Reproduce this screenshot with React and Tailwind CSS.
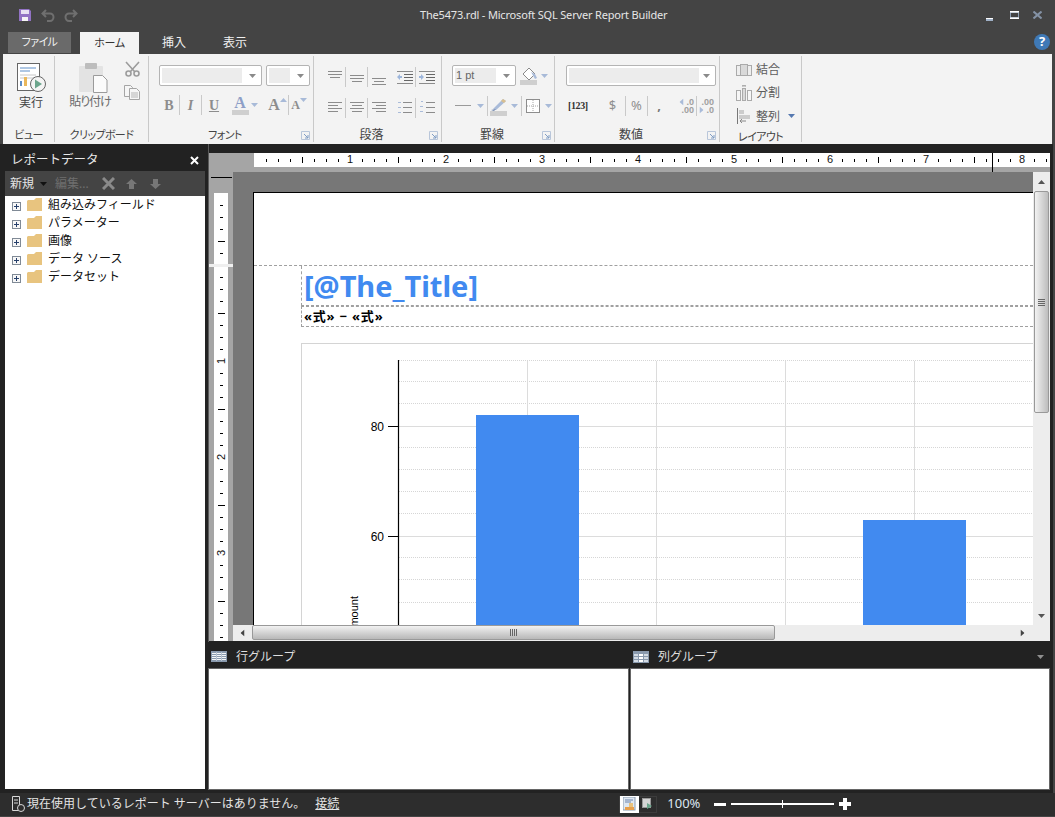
import React from "react";

// small triangle used by every dropdown in the ribbon
function Caret({ color = "#8a8a8a", className = "" }) {
  return (
    <svg width="7" height="4" viewBox="0 0 7 4" className={className}>
      <path d="M0 0h7L3.5 4z" fill={color} />
    </svg>
  );
}

function Launcher() {
  return (
    <svg width="9" height="9" viewBox="0 0 9 9" className="mr-[3px] mt-[2px] shrink-0">
      <path d="M.5 .5h8v8h-8z" fill="none" stroke="#b9c6da" />
      <path d="M3 3l4 4M7 4v3H4" fill="none" stroke="#7f9cc4" />
    </svg>
  );
}

function Group({ className, label, narrow, launcher, children }) {
  return (
    <div className={`flex h-full shrink-0 flex-col border-r border-[#c9c9c9] ${className}`}>
      <div className="flex-1">{children}</div>
      <div className="flex h-[18px] items-center pt-[3px] text-[12px] leading-none text-[#444] [font-feature-settings:'palt']">
        <span className={`flex-1 text-center ${narrow ? "text-[11px] tracking-[-0.6px]" : ""}`}>{label}</span>
        {launcher && <Launcher />}
      </div>
    </div>
  );
}

function Combo({ className, innerClass, text }) {
  return (
    <div className={`flex h-[21px] items-center rounded-[2px] border border-[#b4b4b4] bg-white pl-[2px] ${className}`}>
      <div className={`h-[15px] bg-[#ececec] font-['Liberation_Sans',sans-serif] text-[11px] leading-[15px] text-[#666] ${innerClass}`}>{text}</div>
      <Caret className="ml-auto mr-[5px]" />
    </div>
  );
}

// lines: [x1, x2, y, colour]
function Lines({ lines, w = 18, h = 16, color = "#8c8c8c", children }) {
  return (
    <svg width={w} height={h} viewBox={`0 0 ${w} ${h}`}>
      {lines.map((l, i) => (
        <path key={i} d={`M${l[0]} ${l[2] + 0.5}H${l[1]}`} stroke={l[3] || color} />
      ))}
      {children}
    </svg>
  );
}

function Cell({ className, children }) {
  return <div className={`flex h-[20px] shrink-0 items-center justify-center ${className}`}>{children}</div>;
}

function FolderIcon() {
  return (
    <svg width="15" height="13" viewBox="0 0 15 13" className="shrink-0">
      <path d="M0 3l1-1h6l2-2h6v13H0z" fill="#e8c47f" />
    </svg>
  );
}

function PlusBox() {
  return (
    <svg width="9" height="9" viewBox="0 0 9 9" className="shrink-0">
      <rect x=".5" y=".5" width="8" height="8" fill="#f7f7f7" stroke="#808a96" />
      <path d="M2 4.5h5M4.5 2v5" stroke="#27406b" />
    </svg>
  );
}

function RowsIcon() {
  return (
    <svg width="16" height="11" viewBox="0 0 16 11" className="shrink-0">
      <rect width="16" height="11" fill="#8a9aae" />
      {[2, 4, 6, 8].map((y) => (
        <rect key={y} x="1" y={y} width="14" height="1" fill="#f4f6f8" />
      ))}
      <path d="M5.5 1V10M10.5 1V10" stroke="#b6c2d0" />
    </svg>
  );
}

function ColumnsIcon() {
  return (
    <svg width="16" height="12" viewBox="0 0 16 12" className="shrink-0">
      <rect width="16" height="12" fill="#8a9aae" />
      {[3, 6, 9].map((y) => (
        <rect key={y} x="6" y={y} width="4" height="2" fill="#fff" />
      ))}
      {[3, 6, 9].map((y) => (
        <rect key={y} x="1" y={y} width="4" height="2" fill="#d3dbe4" />
      ))}
      {[3, 6, 9].map((y) => (
        <rect key={y} x="11" y={y} width="4" height="2" fill="#d3dbe4" />
      ))}
    </svg>
  );
}

function HorizontalRuler() {
  const ticks = Array.from({ length: 66 }, (_, i) => i + 1);
  return (
    <svg width="796" height="19" viewBox="0 0 796 19" className="block">
      <rect width="796" height="14" fill="#fff" />
      {ticks.map((i) => {
        const x = i * 12;
        if (i % 8 === 0) {
          return (
            <text key={i} x={x} y="10" fontSize="11" textAnchor="middle" fontFamily="Liberation Sans, sans-serif" fill="#111">
              {i / 8}
            </text>
          );
        }
        return i % 4 === 0 ? (
          <path key={i} d={`M${x + 0.5} 4V10`} stroke="#000" />
        ) : (
          <path key={i} d={`M${x + 0.5} 6V9`} stroke="#000" />
        );
      })}
      <path d="M738.5 0V19" stroke="#000" />
    </svg>
  );
}

function VerticalRuler() {
  const ticks = Array.from({ length: 31 }, (_, i) => i + 1);
  return (
    <svg width="24" height="469" viewBox="0 0 24 469" className="block shrink-0">
      <rect x="5" y="21" width="14" height="448" fill="#fff" />
      <path d="M2 5.5H23" stroke="#000" />
      {[33, 45, 57, 81].map((y) => <path key={y} d={`M11 ${y + 0.5}H14`} stroke="#000" />)}
      <path d="M9 69.5H16" stroke="#000" />
      <rect y="92" width="24" height="3" fill="#efefef" />
      {ticks.map((i) => {
        const y = 93 + i * 12;
        if (i % 8 === 0) {
          return (
            <text key={i} fontSize="11" textAnchor="middle" fontFamily="Liberation Sans, sans-serif" fill="#111" transform={`translate(15.5 ${y}) rotate(-90)`}>
              {i / 8}
            </text>
          );
        }
        return i % 4 === 0 ? (
          <path key={i} d={`M9 ${y + 0.5}H16`} stroke="#000" />
        ) : (
          <path key={i} d={`M11 ${y + 0.5}H14`} stroke="#000" />
        );
      })}
    </svg>
  );
}

function Chart() {
  // coordinates are relative to the chart frame at (302, 344)
  const minor = [17, 38, 60, 104, 126, 148, 170, 214, 236, 259];
  const major = [82, 192];
  const vertical = [225.5, 354.5, 483.5, 612.5];
  return (
    <svg width="731" height="281" viewBox="0 0 731 281" className="block">
      {minor.map((y) => <path key={y} d={`M97 ${y - 0.5}H731`} stroke="#d6d6d6" strokeDasharray="1 1" />)}
      {major.map((y) => <path key={y} d={`M97 ${y + 0.5}H731`} stroke="#dcdcdc" />)}
      {vertical.map((x) => <path key={x} d={`M${x} 17V281`} stroke="#dcdcdc" />)}
      <rect x="174" y="71" width="103" height="210" fill="#418af0" />
      <rect x="561" y="176" width="103" height="105" fill="#418af0" />
      <path d="M96.5 16V281" stroke="#000" strokeWidth="1.2" />
      <path d="M86 82.5H96M86 192.5H96" stroke="#000" />
      <g fontFamily="Liberation Sans, sans-serif" fontSize="12" fill="#000" textAnchor="end">
        <text x="82" y="87">80</text>
        <text x="82" y="197">60</text>
      </g>
      <text transform="translate(55.5 252) rotate(-90)" textAnchor="end" fontFamily="Liberation Sans, sans-serif" fontSize="11" fill="#000">
        Amount
      </text>
    </svg>
  );
}

function IndentIcon({ right }) {
  return (
    <Lines lines={[[1, 17, 2], [8, 17, 5, "#666"], [8, 17, 8, "#666"], [8, 17, 11, "#666"], [1, 17, 14]]}>
      <path d={right ? "M1 7h2V5l3 3-3 3V9H1z" : "M6 7H4V5L1 8l3 3V9h2z"} fill="#9db6dc" />
    </Lines>
  );
}

function Ribbon() {
  return (
    <div className="mx-[3px] flex h-[90px] bg-[#f3f3f3] py-[2px]">
      <Group className="w-[52px]" label="ビュー" narrow>
        <div className="flex flex-col items-center pl-[5px] pt-[7px]">
          <svg width="29" height="30" viewBox="0 0 29 30">
            <rect x=".5" y=".5" width="22" height="27" fill="#fff" stroke="#666" />
            <path d="M3 5h16M3 8h10" stroke="#5f8fc8" />
            <path d="M3 12h16M3 15h16" stroke="#c8c8c8" />
            <rect x="3" y="18" width="2" height="5" fill="#5f8fc8" />
            <rect x="7" y="14" width="3" height="9" fill="#eab85c" />
            <circle cx="21" cy="21" r="7.5" fill="#f4f4f4" stroke="#666" />
            <path d="M18 16.5l7 4.5-7 4.5z" fill="#6ba58c" />
          </svg>
          <span className="mt-[1px] text-[12px] leading-[18px] text-[#444]">実行</span>
        </div>
      </Group>
      <Group className="w-[94px]" label="クリップボード" narrow>
        <div className="flex pt-[5px]">
          <div className="ml-[13px] flex w-[44px] flex-col items-center pt-[2px]">
            <svg width="29" height="30" viewBox="0 0 29 30" className="ml-[6px]">
              <rect x="0" y="3" width="24" height="26" rx="1" fill="#e3e3e3" />
              <rect x="6" y="0" width="12" height="6" rx="1" fill="#bdbdbd" />
              <path d="M14.5 12.5h9l4.5 4.5v12.5H14.5z" fill="#fbfbfb" stroke="#9b9b9b" />
            </svg>
            <span className="whitespace-nowrap text-[12px] leading-[18px] tracking-[-1px] text-[#6a6a6a] [font-feature-settings:'palt']">貼り付け</span>
          </div>
          <div className="ml-[12px] flex flex-col items-center">
            <svg width="15" height="16" viewBox="0 0 15 16" fill="none" stroke="#9c9c9c" strokeWidth="1.6">
              <circle cx="3.5" cy="12.5" r="2.5" />
              <circle cx="11.5" cy="12.5" r="2.5" />
              <path d="M1 1l8.5 9.5M14 1L5.5 10.5" />
            </svg>
            <svg width="16" height="15" viewBox="0 0 16 15" className="mt-[8px]" fill="#f6f6f6" stroke="#a5a5a5">
              <path d="M.5 .5h6l2 2v9h-8z" />
              <path d="M5.5 3.5h7l3 3v8h-10z" />
              <path d="M7 8h7M7 10h7M7 12h7" stroke="#b5b5b5" />
            </svg>
          </div>
        </div>
      </Group>
      <Group className="w-[165px]" label="フォント" narrow launcher>
        <div className="pl-[10px] pt-[9px]">
          <div className="flex gap-[4px]">
            <Combo className="w-[103px]" innerClass="w-[80px]" />
            <Combo className="w-[44px]" innerClass="w-[21px]" />
          </div>
          <div className="mt-[9px] flex items-center font-['Liberation_Serif','Noto_Serif',serif] font-bold text-[#8d8d8d]">
            <Cell className="w-[21px] border-r border-[#c9c9c9] text-[14px]">B</Cell>
            <Cell className="w-[22px] border-r border-[#c9c9c9] text-[14px] italic">I</Cell>
            <Cell className="w-[24px] text-[14px] underline">U</Cell>
            <Cell className="ml-[4px] w-[20px] flex-col">
              <span className="text-[16px] leading-[15px] text-[#8e9fc7]">A</span>
              <span className="h-[5px] w-[17px] bg-[#cfcfcf]" />
            </Cell>
            <Caret color="#a8bad8" className="ml-[1px]" />
            <Cell className="ml-[9px] w-[22px] border-r border-[#c9c9c9] text-[16px]">
              A<Caret color="#a8bad8" className="mb-[10px] rotate-180" />
            </Cell>
            <Cell className="w-[20px] text-[12px]">
              A<Caret color="#a8bad8" className="mb-[10px]" />
            </Cell>
          </div>
        </div>
      </Group>
      <Group className="w-[128px]" label="段落" launcher>
        <div className="pl-[10px] pt-[11px]">
          <div className="flex items-center">
            <Cell className="w-[22px] border-r border-[#c9c9c9]">
              <Lines lines={[[2, 16, 2], [2, 16, 5], [4, 14, 8]]} />
            </Cell>
            <Cell className="w-[22px] border-r border-[#c9c9c9]">
              <Lines lines={[[2, 16, 6], [2, 16, 9], [4, 14, 12]]} />
            </Cell>
            <Cell className="w-[22px]">
              <Lines lines={[[2, 16, 9], [4, 14, 12], [2, 16, 15]]} />
            </Cell>
            <Cell className="ml-[5px] w-[21px] border-r border-[#c9c9c9]">
              <IndentIcon />
            </Cell>
            <Cell className="w-[22px]">
              <IndentIcon right />
            </Cell>
          </div>
          <div className="mt-[11px] flex items-center">
            <Cell className="w-[22px] border-r border-[#c9c9c9]">
              <Lines lines={[[2, 16, 2], [2, 12, 5], [2, 16, 8], [2, 12, 11]]} />
            </Cell>
            <Cell className="w-[22px] border-r border-[#c9c9c9]">
              <Lines lines={[[2, 16, 2], [4, 14, 5], [2, 16, 8], [4, 14, 11]]} />
            </Cell>
            <Cell className="w-[22px]">
              <Lines lines={[[2, 16, 2], [6, 16, 5], [2, 16, 8], [6, 16, 11]]} />
            </Cell>
            <Cell className="ml-[5px] w-[21px] border-r border-[#c9c9c9]">
              <Lines lines={[[2, 5, 2, "#a9bbd9"], [7, 16, 2], [2, 5, 7, "#a9bbd9"], [7, 16, 7], [2, 5, 12, "#a9bbd9"], [7, 16, 12]]} />
            </Cell>
            <Cell className="w-[22px]">
              <Lines lines={[[3, 5, 1, "#a9bbd9"], [8, 17, 2], [2, 5, 6, "#a9bbd9"], [8, 17, 7], [2, 5, 11, "#a9bbd9"], [8, 17, 12]]} />
            </Cell>
          </div>
        </div>
      </Group>
      <Group className="w-[113px]" label="罫線" launcher>
        <div className="pl-[10px] pt-[9px]">
          <div className="flex items-center">
            <Combo className="w-[64px]" innerClass="w-[41px] pl-[1px]" text="1 pt" />
            <svg width="18" height="20" viewBox="0 0 18 20" className="ml-[4px]">
              <path d="M3 8l6-6 6 6-6 6z" fill="#fff" stroke="#8a8a8a" />
              <path d="M11 6l4 2 2 4-2 1z" fill="#a9bbd9" />
              <rect y="14" width="17" height="5" fill="#cfcfcf" />
            </svg>
            <Caret color="#a8bad8" className="ml-[3px]" />
          </div>
          <div className="mt-[10px] flex items-center">
            <svg width="16" height="2" viewBox="0 0 16 2" className="ml-[3px]">
              <rect width="16" height="1" fill="#9a9a9a" />
            </svg>
            <Caret color="#a8bad8" className="ml-[6px]" />
            <div className="ml-[3px] h-[20px] border-r border-[#c9c9c9]" />
            <svg width="18" height="19" viewBox="0 0 18 19" className="ml-[2px]">
              <path d="M3 12L13 2l3 2L6 13z" fill="#a9bbd9" />
              <path d="M13 2l3 2-2 2-3-2z" fill="#d9bf8f" />
              <path d="M1 13l5-1-2 2z" fill="#6d84ad" />
              <rect y="14" width="17" height="5" fill="#cfcfcf" />
            </svg>
            <Caret color="#a8bad8" className="ml-[3px]" />
            <div className="ml-[3px] h-[20px] border-r border-[#c9c9c9]" />
            <svg width="14" height="14" viewBox="0 0 14 14" className="ml-[4px]">
              <rect x=".5" y=".5" width="13" height="13" fill="#fff" stroke="#8d8d8d" />
              <path d="M7 1v12M1 7h12" stroke="#a5a5a5" strokeDasharray="1 1" />
            </svg>
            <Caret color="#a8bad8" className="ml-[5px]" />
          </div>
        </div>
      </Group>
      <Group className="w-[165px]" label="数値" launcher>
        <div className="pl-[11px] pt-[9px]">
          <Combo className="w-[150px]" innerClass="w-[130px]" />
          <div className="mt-[10px] flex items-center text-[#8f8f8f]">
            <span className="ml-[2px] w-[18px] whitespace-nowrap text-center font-['Liberation_Serif',serif] text-[10px] font-bold leading-[12px] tracking-[-0.4px] text-[#333]">[123]</span>
            <Caret color="#5578b0" className="ml-[3px]" />
            <Cell className="ml-[8px] w-[29px] border-r border-[#c9c9c9] pl-[3px] text-[13px]">$</Cell>
            <Cell className="w-[22px] border-r border-[#c9c9c9] text-[13px]">%</Cell>
            <Cell className="w-[22px] text-[13px] font-bold text-[#777]">,</Cell>
            <Cell className="ml-[5px] w-[22px] flex-col items-end border-r border-[#c9c9c9] pr-[2px] font-['Liberation_Sans',sans-serif] text-[9px] font-bold leading-[8px] text-[#a0a0a0]">
              <span className="flex items-center gap-[1px]">
                <Caret color="#a9bbd9" className="rotate-90" />.0
              </span>
              <span>.00</span>
            </Cell>
            <Cell className="w-[22px] flex-col items-end pr-[5px] font-['Liberation_Sans',sans-serif] text-[9px] font-bold leading-[8px] text-[#a0a0a0]">
              <span>.00</span>
              <span className="flex items-center gap-[1px]">
                <Caret color="#a9bbd9" className="-rotate-90" />.0
              </span>
            </Cell>
          </div>
        </div>
      </Group>
      <Group className="w-[82px]" label="レイアウト" narrow>
        <div className="flex flex-col pl-[16px] pt-[2px] text-[12px] leading-[23px] text-[#5c5c5c]">
          <div className="flex h-[23px] items-center gap-[4px]">
            <svg width="16" height="14" viewBox="0 0 16 14" fill="#eee" stroke="#aaa">
              <rect x=".5" y="2.5" width="4" height="10" />
              <rect x="4.5" y="1.5" width="7" height="11" fill="#d9d9d9" />
              <rect x="11.5" y="2.5" width="4" height="10" />
            </svg>
            <span>結合</span>
          </div>
          <div className="flex h-[23px] items-center gap-[4px]">
            <svg width="16" height="16" viewBox="0 0 16 16" fill="#f6f6f6" stroke="#aaa">
              <path d="M6 1l2-1 2 1z" fill="#aaa" />
              <rect x=".5" y="5.5" width="4" height="10" />
              <rect x="6.5" y="3.5" width="3" height="12" fill="#d9d9d9" />
              <rect x="11.5" y="5.5" width="4" height="10" />
            </svg>
            <span>分割</span>
          </div>
          <div className="flex h-[24px] items-center gap-[4px]">
            <svg width="16" height="16" viewBox="0 0 16 16">
              <path d="M1.5 0V16" stroke="#777" />
              <rect x="3" y="2" width="5" height="4" fill="#ccc" />
              <rect x="3" y="7" width="11" height="4" fill="#ccc" />
              <path d="M10 13H4l2-2M4 13l2 2" fill="none" stroke="#888" />
            </svg>
            <span>整列</span>
            <Caret color="#5578b0" className="ml-[4px]" />
          </div>
        </div>
      </Group>
    </div>
  );
}

function ReportDataPanel() {
  const items = ["組み込みフィールド", "パラメーター", "画像", "データ ソース", "データセット"];
  return (
    <div className="flex w-[208px] shrink-0 flex-col pb-[4px] pl-[5px] pr-[3px]">
      <div className="flex h-[27px] items-center justify-between pl-[6px] pr-[6px] pt-[6px] text-[12.5px] text-[#e8e8e8]">
        <span>レポートデータ</span>
        <svg width="9" height="9" viewBox="0 0 9 9">
          <path d="M1 1l7 7M8 1L1 8" stroke="#fff" strokeWidth="2" />
        </svg>
      </div>
      <div className="flex h-[25px] items-center bg-[#444] pl-[5px] text-[12px]">
        <span className="text-[#e6e6e6]">新規</span>
        <Caret color="#111" className="ml-[6px]" />
        <span className="ml-[8px] text-[#6e6e6e]">編集...</span>
        <svg width="13" height="13" viewBox="0 0 13 13" className="ml-[13px]">
          <path d="M1 1l11 11M12 1L1 12" stroke="#8a8a8a" strokeWidth="3" />
        </svg>
        <svg width="11" height="10" viewBox="0 0 11 10" className="ml-[11px]">
          <path d="M5.5 0L11 5H8v5H3V5H0z" fill="#777" />
        </svg>
        <svg width="11" height="10" viewBox="0 0 11 10" className="ml-[13px]">
          <path d="M5.5 10L11 5H8V0H3v5H0z" fill="#777" />
        </svg>
      </div>
      <div className="flex-1 bg-white pt-[1px]">
        {items.map((item) => (
          <div key={item} className="flex h-[18px] items-center pl-[7px] text-[12px] text-[#111]">
            <PlusBox />
            <div className="mb-[3px] ml-[6px]"><FolderIcon /></div>
            <span className="ml-[6px] whitespace-pre pb-[2px]">{item}</span>
          </div>
        ))}
      </div>
    </div>
  );
}

function DesignSurface() {
  return (
    <div className="h-[433px] w-[780px] overflow-hidden border-l border-t border-black bg-white text-black">
      <div className="h-[73px] border-b border-dashed border-[#a0a0a0]" />
      <div className="ml-[47px] border-b border-l border-dashed border-[#a0a0a0] pl-[2px]">
        <div className="h-[39px] text-[29px] font-bold leading-[39px] text-[#418af0]">[@The_Title]</div>
      </div>
      <div className="ml-[47px] h-[21px] border-b border-l border-t border-dashed border-[#a0a0a0] pl-[2px] text-[13px] font-bold leading-[19px] tracking-[0.8px]">
        «式» − «式»
      </div>
      <div className="ml-[47px] mt-[16px] border-l border-t border-[#d4d4d4]">
        <Chart />
      </div>
    </div>
  );
}

function DesignArea() {
  return (
    <div className="flex flex-1 flex-col border-l border-[#5a5a5a]">
      <div className="h-[9px] bg-[#222]" />
      <div className="bg-[#a5a5a5] pl-[45px]">
        <HorizontalRuler />
      </div>
      <div className="flex bg-[#a5a5a5]">
        <VerticalRuler />
        <div className="flex flex-1 flex-col">
          <div className="flex h-[453px]">
            <div className="w-[800px] bg-[#777] pl-[20px] pt-[20px]">
              <DesignSurface />
            </div>
            <div className="flex w-[17px] flex-col items-center bg-[#ededed]">
              <div className="flex h-[19px] items-center">
                <Caret color="#555" className="rotate-180" />
              </div>
              <div className="flex h-[222px] w-[15px] flex-col items-center justify-center gap-[1px] rounded-[2px] border border-[#999] bg-linear-to-r from-[#f2f2f2] to-[#bdbdbd]">
                <div className="h-[1px] w-[7px] bg-[#666]" />
                <div className="h-[1px] w-[7px] bg-[#666]" />
                <div className="h-[1px] w-[7px] bg-[#666]" />
                <div className="h-[1px] w-[7px] bg-[#666]" />
              </div>
              <div className="mt-auto flex h-[19px] items-center">
                <Caret color="#555" />
              </div>
            </div>
          </div>
          <div className="flex h-[16px] items-start bg-[#ededed]">
            <div className="flex h-[15px] w-[19px] items-center justify-center">
              <Caret color="#444" className="rotate-90" />
            </div>
            <div className="flex h-[15px] w-[523px] items-center justify-center gap-[1px] rounded-[2px] border border-[#999] bg-linear-to-b from-[#f2f2f2] to-[#b8b8b8]">
              <div className="h-[7px] w-[1px] bg-[#666]" />
              <div className="h-[7px] w-[1px] bg-[#666]" />
              <div className="h-[7px] w-[1px] bg-[#666]" />
              <div className="h-[7px] w-[1px] bg-[#666]" />
            </div>
            <div className="flex h-[15px] w-[258px] items-center justify-end pr-[7px]">
              <Caret color="#444" className="-rotate-90" />
            </div>
          </div>
        </div>
      </div>
    </div>
  );
}

function GroupingPane() {
  return (
    <div className="flex flex-col">
      <div className="flex h-[26px] items-center pt-[3px] text-[12px] text-[#dedede]">
        <div className="flex w-[422px] items-center pl-[3px]">
          <RowsIcon />
          <span className="ml-[9px]">行グループ</span>
        </div>
        <div className="flex flex-1 items-center pl-[3px]">
          <ColumnsIcon />
          <span className="ml-[9px]">列グループ</span>
          <Caret color="#8f8f8f" className="ml-auto mr-[6px]" />
        </div>
      </div>
      <div className="flex h-[122px] gap-[1px]">
        <div className="w-[421px] border border-[#666] bg-white" />
        <div className="w-[420px] border border-[#666] bg-white" />
      </div>
    </div>
  );
}

function StatusBar() {
  return (
    <div className="flex h-[24px] items-center border-b border-[#444] bg-[#2d2d2d] pb-[1px] pl-[11px] text-[12px] text-[#e4e4e4]">
      <svg width="14" height="16" viewBox="0 0 14 16" fill="none" stroke="#d8d8d8" className="shrink-0">
        <path d="M1.5 .5h7v14h-7z" />
        <path d="M3 4h4M3 7h4" />
        <circle cx="10" cy="12" r="3.5" fill="#2d2d2d" />
      </svg>
      <span className="ml-[2px] whitespace-pre">現在使用しているレポート サーバーはありません。</span>
      <span className="ml-[10px] underline">接続</span>
      <div className="ml-[280px] flex h-[17px] w-[38px] items-center border border-[#3c3c3c]">
        <div className="flex h-[17px] w-[19px] items-center justify-center bg-white">
          <svg width="13" height="14" viewBox="0 0 13 14">
            <rect width="12" height="13" fill="#dfe8f2" stroke="#8a9aae" />
            <path d="M2 3h8M2 5h6" stroke="#6d84ad" />
            <rect x="2" y="10" width="9" height="3" fill="#e8a04c" />
            <rect x="6" y="6" width="4" height="4" fill="#e8c27e" />
          </svg>
        </div>
        <svg width="12" height="12" viewBox="0 0 12 12" className="ml-[3px]">
          <rect x=".5" y=".5" width="8" height="9" fill="#d5d5d5" stroke="#999" />
          <path d="M5 5l5 3-5 3z" fill="#6ba58c" />
        </svg>
      </div>
      <span className="ml-[10px] text-[13px] text-[#dce6f0]">100%</span>
      <div className="ml-[14px] h-[3px] w-[12px] bg-white" />
      <div className="relative ml-[5px] h-[2px] w-[103px] bg-white">
        <div className="absolute left-[51px] top-[-3px] h-[8px] w-[1px] bg-white" />
      </div>
      <svg width="12" height="12" viewBox="0 0 12 12" className="ml-[5px]">
        <path d="M4 0h4v4h4v4H8v4H4V8H0V4h4z" fill="#fff" />
      </svg>
    </div>
  );
}

export default function App() {
  return (
    <div className="flex h-[817px] w-[1055px] flex-col overflow-hidden bg-[#444] font-['Noto_Sans','Noto_Sans_CJK_JP',sans-serif]">
      {/* title bar */}
      <div className="flex h-[30px] shrink-0 items-center text-[#e6e6e6]">
        <div className="flex w-[420px] items-center pl-[19px]">
          <svg width="12" height="12" viewBox="0 0 12 12">
            <path d="M0 0h10l2 2v10H0z" fill="#9273c4" />
            <rect x="2" y="1" width="8" height="4" fill="#e8e2f2" />
            <rect x="3" y="8" width="6" height="4" fill="#f5f5f5" />
          </svg>
          <svg width="14" height="13" viewBox="0 0 14 13" fill="none" stroke="#6f6f6f" strokeWidth="2" className="ml-[10px]">
            <path d="M5 1L1.5 4.5 5 8M2 4.5h7a3.5 3.5 0 0 1 3.5 3.5c0 2-1.5 4-3.5 4H6" />
          </svg>
          <svg width="14" height="13" viewBox="0 0 14 13" fill="none" stroke="#6f6f6f" strokeWidth="2" className="ml-[9px]">
            <path d="M9 1l3.5 3.5L9 8M12 4.5H5A3.5 3.5 0 0 0 1.5 8c0 2 1.5 4 3.5 4h3" />
          </svg>
        </div>
        <span className="text-[11px] tracking-[-0.18px]">The5473.rdl - Microsoft SQL Server Report Builder</span>
        <div className="ml-auto flex items-center pr-[13px]">
          <div className="mt-[9px] h-[3px] w-[7px] border-t border-white bg-[#9fb0c6]" />
          <svg width="9" height="8" viewBox="0 0 9 8" className="ml-[17px]">
            <rect width="9" height="8" fill="#8fa0b6" />
            <rect width="9" height="1.5" fill="#fff" />
            <rect y="6.5" width="9" height="1.5" fill="#fff" />
            <rect x="1" y="2" width="7" height="4" fill="#444" />
          </svg>
          <svg width="9" height="8" viewBox="0 0 9 8" className="ml-[14px]">
            <path d="M.5 .5l8 7M8.5 .5l-8 7" stroke="#8492a5" strokeWidth="2" />
          </svg>
        </div>
      </div>

      {/* tabs */}
      <div className="flex h-[24px] shrink-0 items-end pl-[8px] text-[12px] text-[#f0f0f0] [font-feature-settings:'palt']">
        <div className="mb-[1px] flex h-[21px] w-[63px] items-center justify-center bg-[#6a6a6a] text-[11px] tracking-[-0.6px]">ファイル</div>
        <div className="ml-[9px] flex h-[22px] w-[59px] items-center justify-center bg-[#f3f3f3] text-[11px] tracking-[-0.3px] text-[#333]">ホーム</div>
        <div className="flex h-[22px] w-[70px] items-center justify-center">挿入</div>
        <div className="flex h-[22px] w-[52px] items-center justify-center">表示</div>
        <div className="mb-[4px] ml-auto mr-[5px] flex h-[16px] w-[16px] items-center justify-center rounded-full bg-[#3f79b6] text-[13px] font-bold text-white">
          ?
        </div>
      </div>

      <div className="shrink-0">
        <Ribbon />
      </div>

      {/* main area */}
      <div className="mr-[2px] flex h-[649px] shrink-0 bg-[#222]">
        <ReportDataPanel />
        <div className="flex flex-1 flex-col pb-[3px] pr-[3px]">
          <DesignArea />
          <GroupingPane />
        </div>
      </div>

      <StatusBar />
    </div>
  );
}
